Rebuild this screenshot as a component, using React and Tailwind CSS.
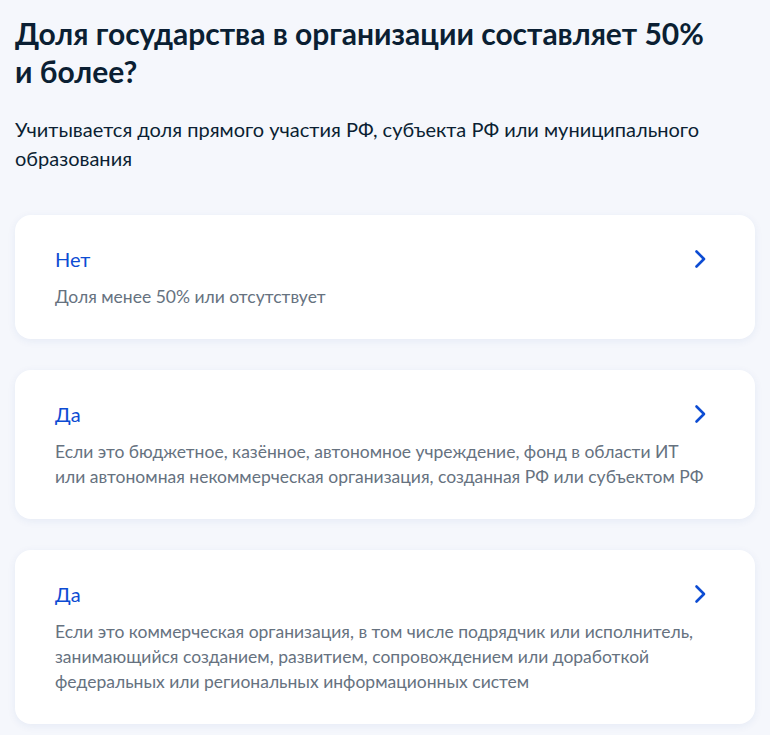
const options = [
  {
    title: "Нет",
    text: "Доля менее 50% или отсутствует",
  },
  {
    title: "Да",
    text: "Если это бюджетное, казённое, автономное учреждение, фонд в области ИТ или автономная некоммерческая организация, созданная РФ или субъектом РФ",
  },
  {
    title: "Да",
    text: "Если это коммерческая организация, в том числе подрядчик или исполнитель, занимающийся созданием, развитием, сопровождением или доработкой федеральных или региональных информационных систем",
  },
];

function Chevron() {
  return (
    <svg width="24" height="24" viewBox="0 0 24 24" fill="none" className="shrink-0">
      <path d="M8.5 4.5L16 12L8.5 19.5" stroke="#0d4cd3" strokeWidth="2.6" strokeLinecap="round" strokeLinejoin="round" />
    </svg>
  );
}

function OptionCard({ title, text }) {
  return (
    <button className="block w-full text-left rounded-2xl bg-white pl-10 pr-[43px] pt-8 pb-[30px] shadow-[0_2px_8px_rgba(30,70,160,0.07)]">
      <div className="flex items-center justify-between">
        <span className="text-[20px] leading-6 text-[#0d4cd3]">{title}</span>
        <Chevron />
      </div>
      <p className="mt-[13px] text-[17.5px] leading-[25px] text-[#66727f]">{text}</p>
    </button>
  );
}

export default function App() {
  return (
    <div className="min-h-[735px] bg-[#f5f7fc] px-[15px] pt-[14px] pb-8 font-['Lato',sans-serif] text-[#0b1f33]">
      <h1 className="text-[30px] leading-[38px] font-bold pr-10">
        Доля государства в организации составляет 50% и более?
      </h1>
      <p className="mt-[25px] text-[20px] leading-[29px] pr-10">
        Учитывается доля прямого участия РФ, субъекта РФ или муниципального образования
      </p>
      <div className="mt-[42px] flex flex-col gap-[31px]">
        {options.map((opt, i) => (
          <OptionCard key={i} title={opt.title} text={opt.text} />
        ))}
      </div>
    </div>
  );
}
